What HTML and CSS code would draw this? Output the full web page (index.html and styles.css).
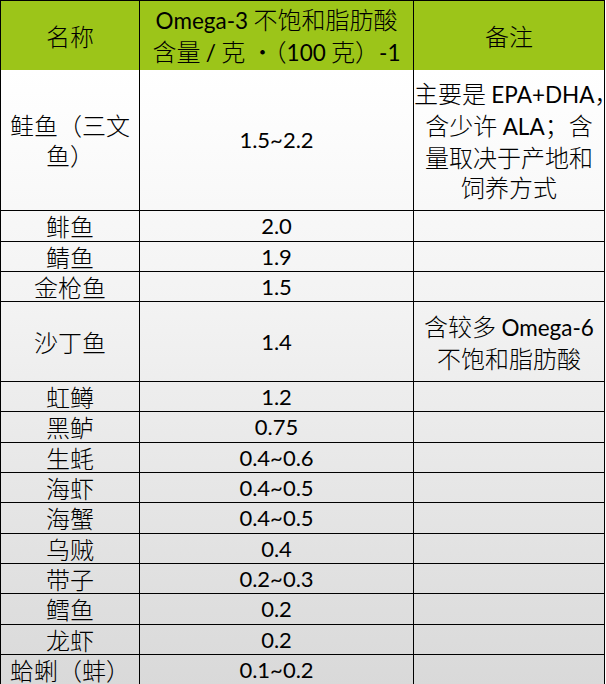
FILE: index.html
```html
<!DOCTYPE html>
<html lang="zh-CN">
<head>
<meta charset="utf-8">
<title>鱼类 Omega-3 含量</title>
<link rel="stylesheet" href="styles.css">
</head>
<body>
<table class="fish-table">
  <thead>
    <tr class="head-row">
      <th class="c-name">名称</th>
      <th class="c-val"><span class="lat">Omega-3</span> 不饱和脂肪酸<br>含量 <span class="lat">/</span> 克 ·（<span class="lat">100</span> 克）<span class="lat">-1</span></th>
      <th class="c-note">备注</th>
    </tr>
  </thead>
  <tbody>
    <tr class="h141"><td class="multi">鲑鱼（三文<br>鱼）</td><td class="num">1.5~2.2</td><td class="multi nowrap">主要是 <span class="lat">EPA+DHA</span>，<br>含少许 <span class="lat">ALA</span>；含<br>量取决于产地和<br>饲养方式</td></tr>
    <tr class="h31"><td>鲱鱼</td><td class="num">2.0</td><td></td></tr>
    <tr class="h30"><td>鲭鱼</td><td class="num">1.9</td><td></td></tr>
    <tr class="h30"><td>金枪鱼</td><td class="num">1.5</td><td></td></tr>
    <tr class="h80"><td>沙丁鱼</td><td class="num">1.4</td><td class="multi nowrap">含较多 <span class="lat">Omega-6</span><br>不饱和脂肪酸</td></tr>
    <tr class="h30"><td>虹鳟</td><td class="num">1.2</td><td></td></tr>
    <tr class="h31"><td>黑鲈</td><td class="num">0.75</td><td></td></tr>
    <tr class="h30"><td>生蚝</td><td class="num">0.4~0.6</td><td></td></tr>
    <tr class="h30"><td>海虾</td><td class="num">0.4~0.5</td><td></td></tr>
    <tr class="h31"><td>海蟹</td><td class="num">0.4~0.5</td><td></td></tr>
    <tr class="h30"><td>乌贼</td><td class="num">0.4</td><td></td></tr>
    <tr class="h30"><td>带子</td><td class="num">0.2~0.3</td><td></td></tr>
    <tr class="h31"><td>鳕鱼</td><td class="num">0.2</td><td></td></tr>
    <tr class="h30"><td>龙虾</td><td class="num">0.2</td><td></td></tr>
    <tr class="h30"><td class="nowrap">蛤蜊（蚌）</td><td class="num">0.1~0.2</td><td></td></tr>
  </tbody>
</table>
</body>
</html>
```

FILE: styles.css
```css
html, body {
  margin: 0;
  padding: 0;
  background: #ffffff;
  overflow: hidden;
}

.fish-table {
  table-layout: fixed;
  width: 605px;
  border-collapse: separate;
  border-spacing: 0;
  border-left: 1px solid #000;
  border-top: 1px solid #000;
  background: linear-gradient(to bottom, #ffffff 70px, #f3f3f3 300px, #d9d9d9 684px);
  font-family: "Noto Sans CJK SC", "Lato", sans-serif;
  font-size: 24px;
  color: #000;
}

.fish-table th,
.fish-table td {
  padding: 0;
  text-align: center;
  vertical-align: middle;
  border-right: 1px solid #000;
  border-bottom: 1px solid #000;
  font-weight: 300;
  line-height: 28px;
  overflow: visible;
}

.c-name { width: 138px; }
.c-val { width: 273px; }
.c-note { width: 190px; }

.head-row th {
  background: #9cc519;
  border-bottom: none;
  height: 69px;
  line-height: 30px;
}

.multi {
  line-height: 30px !important;
}

.nowrap {
  white-space: nowrap;
}

.lat {
  font-family: "Lato", sans-serif;
  font-size: 22.5px;
  font-weight: 400;
}

.num {
  font-family: "Lato", sans-serif;
  font-size: 22px;
  font-weight: 400 !important;
}

.h141 td { height: 140px; }
.h80 td { height: 79px; }
.h31 td { height: 30px; }
.h30 td { height: 29px; }
```
